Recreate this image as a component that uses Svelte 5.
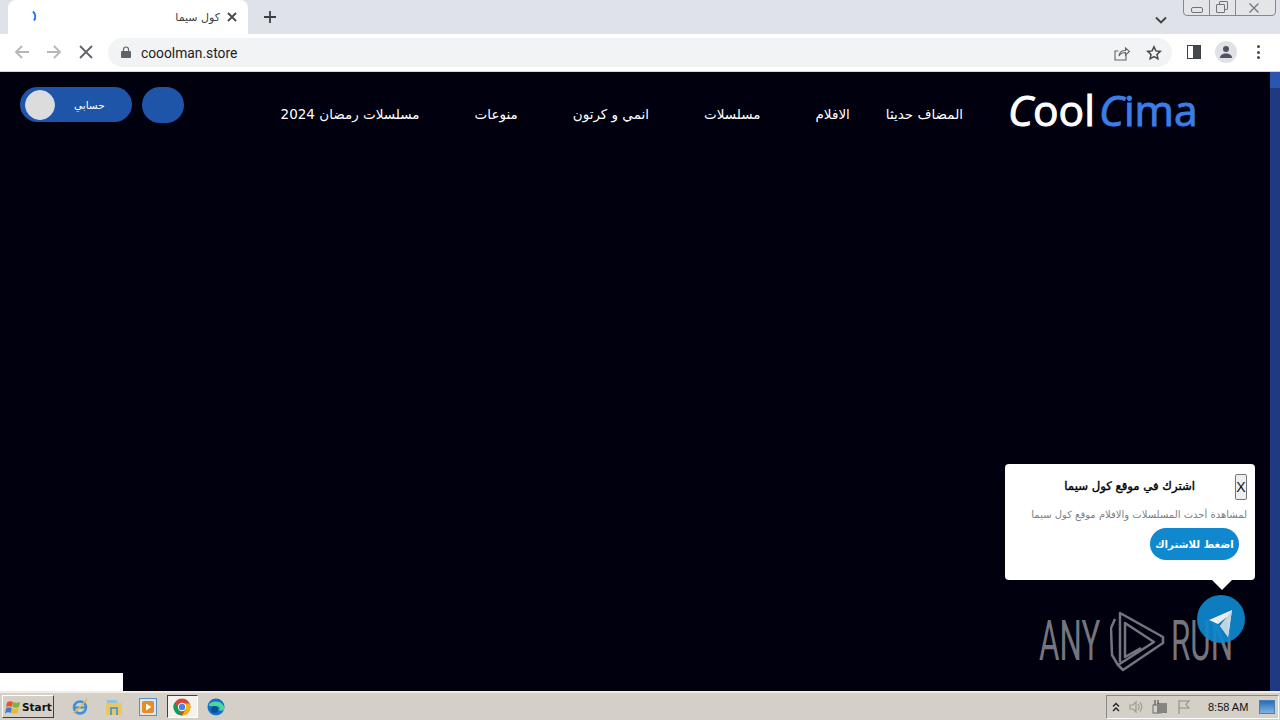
<script lang="ts">
  const navItems = ['المضاف حديثا', 'الافلام', 'مسلسلات', 'انمي و كرتون', 'منوعات', 'مسلسلات رمضان 2024']
</script>

<div class="screen">
  <div class="tabstrip">
    <div class="tab">
      <svg class="spinner" viewBox="0 0 16 16" fill="none" stroke="#1a73e8" stroke-width="2"><path d="M6 3.500a7 7 0 0 1 1 9"/></svg>
      <span class="tab-title">كول سيما</span>
      <svg class="tab-close" viewBox="0 0 10 10" stroke="#45494e" stroke-width="1.800"><path d="M1 1l8 8M9 1l-8 8"/></svg>
    </div>
    <svg class="new-tab" viewBox="0 0 12 12" stroke="#3c4043" stroke-width="1.800"><path d="M6 0v12M0 6h12"/></svg>
    <svg class="tab-menu" viewBox="0 0 12 8" fill="none" stroke="#3c4043" stroke-width="1.800"><path d="M1 1.500l5 5 5-5"/></svg>
    <div class="win-controls">
      <div class="win-btn min"><i></i></div>
      <div class="win-btn restore"><i></i><b></b></div>
      <div class="win-btn close">
        <svg viewBox="0 0 12 10" fill="none" stroke="#6f7378" stroke-width="1.200"><path d="M1.500 .5l9 9M10.500 .5l-9 9"/></svg>
      </div>
    </div>
  </div>

  <div class="toolbar">
    <svg class="tool arrow" viewBox="0 0 16 16" fill="none" stroke="#b4b6b9" stroke-width="1.800"><path d="M15 8H2M8 2L2 8l6 6"/></svg>
    <svg class="tool arrow" viewBox="0 0 16 16" fill="none" stroke="#b4b6b9" stroke-width="1.800"><path d="M1 8h13M8 2l6 6-6 6"/></svg>
    <svg class="tool stop" viewBox="0 0 14 14" fill="none" stroke="#5f6368" stroke-width="1.800"><path d="M1 1l12 12M13 1L1 13"/></svg>
    <div class="omnibox">
      <svg class="lock" viewBox="0 0 10 12" fill="#5f6368"><path d="M1 5h8a1 1 0 0 1 1 1v5a1 1 0 0 1-1 1H1a1 1 0 0 1-1-1V6a1 1 0 0 1 1-1z"/><path d="M2.500 5V3.500a2.500 2.500 0 0 1 5 0V5" fill="none" stroke="#5f6368" stroke-width="1.200"/></svg>
      <span class="url">cooolman.store</span>
      <svg class="share" viewBox="0 0 16 16" fill="none" stroke="#5f6368" stroke-width="1.100"><path d="M12 9.500V15H1V6h3.500"/><path d="M5 11c.4-3.500 3-5.500 6.500-5.500V3L15.500 6.500 11.500 10V7.500C9 7.500 6.500 8.500 5 11z"/></svg>
      <svg class="star" viewBox="0 0 16 16" fill="none" stroke="#45494e" stroke-width="1.500"><path d="M8 1.800l1.900 4.100 4.400.5-3.300 3 .9 4.400L8 11.600l-3.900 2.200.9-4.400-3.300-3 4.400-.5z"/></svg>
    </div>
    <div class="side-panel"><i></i></div>
    <div class="avatar">
      <svg viewBox="0 0 14 14" fill="#4d5361"><circle cx="7" cy="4" r="3"/><path d="M1 13c0-3 2.500-4.500 6-4.500s6 1.500 6 4.500z"/></svg>
    </div>
    <div class="kebab"><i></i><i></i><i></i></div>
  </div>

  <main class="page">
    <div class="content">
      <header class="site-header">
        <div class="user-tools">
          <div class="account-toggle">
            <span class="knob"></span>
            <span class="account-label">حسابي</span>
          </div>
          <div class="round-btn"></div>
        </div>
        <nav class="nav">
          {#each navItems as item}
            <a href="#top">{item}</a>
          {/each}
        </nav>
        <div class="logo" dir="ltr"><span class="c">C</span>ool<span class="blue"><span class="c">C</span>ima</span></div>
      </header>

      <div class="blank-box"></div>

      <div class="subscribe-popup" dir="rtl">
        <div class="popup-head">
          <button class="popup-close">X</button>
          <span class="popup-title">اشترك في موقع كول سيما</span>
        </div>
        <p class="popup-text">لمشاهدة أحدث المسلسلات والافلام موقع كول سيما</p>
        <button class="popup-cta">اضغط للاشتراك</button>
      </div>

      <div class="watermark" aria-hidden="true">
        <span>ANY</span>
        <svg viewBox="0 0 56 62" fill="none" stroke="#75757d" stroke-width="2.500" stroke-linejoin="round"><path d="M10 52V3l43 24v6L13 60l-5-5 36-23L15 13v34l16-9"/><path d="M5 9L1 18l1 27 6 10"/></svg>
        <span>RUN</span>
      </div>

      <div class="telegram">
        <svg viewBox="0 0 48 48"><path fill="#fff" d="M35 15L12 25l9 4 9-7-7 9 8 11z"/><path fill="#cfe6f3" d="M35 15l-4 27-8-11 7-9z"/></svg>
      </div>
    </div>
    <div class="scrollbar"><div class="thumb"></div></div>
  </main>

  <footer class="taskbar">
    <div class="start">
      <svg viewBox="0 0 16 16"><path fill="#e2562a" d="M2 3.500C4 2 6 2 8 3L7 8C5 7 3 7 1 8.500z"/><path fill="#7cb342" d="M8.500 3c2 1 4 1 6.500 0l-1 5c-2 1-4 1-6.500 0z"/><path fill="#3f7fd0" d="M1 9.500C3 8 5 8 6.800 9L6 14c-2-1-4-1-6 .5z"/><path fill="#efb72e" d="M7.500 9c2 1 4 1 6.300 0l-1 5c-2 1-4 1-6.200 0z"/></svg>
      <span>Start</span>
    </div>
    <div class="quick">
      <svg viewBox="0 0 18 18" fill="none"><circle cx="9" cy="9.500" r="6" stroke="#3c8fd8" stroke-width="2.500"/><path d="M4 9.500h10" stroke="#3c8fd8" stroke-width="2"/><path d="M2 15C6 13 12 6 16 1" stroke="#e9b93f" stroke-width="1.500"/></svg>
      <svg viewBox="0 0 18 18"><path fill="#e8c766" d="M1 5h16v12H1z"/><path fill="#8fc3dd" d="M2 2h9l2 3H2z"/><path fill="#5d9cc0" d="M5 9h8v8h-2v-6H7v6H5z"/></svg>
      <svg viewBox="0 0 18 18"><rect x=".5" y=".5" width="17" height="17" fill="#dbe6f3" stroke="#5a8fc6"/><rect x="3" y="3" width="12" height="12" rx="2" fill="#ea8a22"/><path fill="#fff" d="M7 5.500L12.500 9 7 12.500z"/></svg>
      <div class="chrome-task">
        <svg viewBox="0 0 18 18"><circle cx="9" cy="9" r="8.500" fill="#db4437"/><path fill="#0f9d58" d="M1.800 4.500L6 12l3 5.500A8.500 8.500 0 0 1 1.800 4.500z"/><path fill="#f4b400" d="M9 5.500h7.500A8.500 8.500 0 0 1 9 17.500l3.500-6z"/><circle cx="9" cy="9" r="4.200" fill="#fff"/><circle cx="9" cy="9" r="3.200" fill="#4285f4"/></svg>
      </div>
      <svg viewBox="0 0 18 18"><circle cx="9" cy="9" r="8.500" fill="#1372c4"/><path fill="#4fd6a0" d="M1.500 7c3-5 14-5 16 3 0 2.500-3.500 3.500-6 2 2.500-1 1-4-3-4-3 0-5 1-7-1z"/><circle cx="7.500" cy="11.500" r="3.500" fill="#0b4f96"/></svg>
    </div>
    <div class="tray">
      <svg class="tray-up" viewBox="0 0 8 10" fill="none" stroke="#222" stroke-width="1.400"><path d="M1 4.500l3-3 3 3M1 9l3-3 3 3"/></svg>
      <svg class="tray-ico" viewBox="0 0 16 16" fill="none" stroke="#9b9b96" stroke-width="1.200"><path d="M2 6h3l3-3v10l-3-3H2z"/><path d="M10 5c1.500 2 1.500 4 0 6M12 3.500c2.500 3 2.500 6 0 9"/></svg>
      <svg class="tray-ico" viewBox="0 0 16 16"><rect x="1" y="6" width="8" height="8" fill="none" stroke="#6d6d68"/><rect x="5" y="4" width="10" height="10" fill="#85857f"/><path d="M3 1v5M6 1v4" stroke="#55554f" stroke-width="1.200"/></svg>
      <svg class="tray-ico" viewBox="0 0 16 16" fill="none" stroke="#8d8d87" stroke-width="1.100"><path d="M3 1v14M3 2h10l-3 3.500 3 3.500H3"/></svg>
      <span class="clock">8:58 AM</span>
      <div class="show-desktop"></div>
    </div>
  </footer>
</div>

<style>
  :global(body) {
    margin: 0;
    overflow: hidden;
  }

  .screen {
    width: 1280px;
    height: 720px;
    display: flex;
    flex-direction: column;
    font-family: "Roboto", "Liberation Sans", sans-serif;
    overflow: hidden;
  }

  /* browser chrome */
  .tabstrip {
    height: 34px;
    flex-shrink: 0;
    background: #dfe2e8;
    display: flex;
    align-items: flex-end;
    padding-left: 8px;
    position: relative;
  }

  .tab {
    width: 240px;
    height: 34px;
    box-sizing: border-box;
    background: #fff;
    border-radius: 8px 8px 0 0;
    display: flex;
    align-items: center;
    padding: 0 11px 0 19px;
    margin-right: 16px;
  }

  .spinner {
    width: 16px;
    height: 16px;
    margin-top: -2px;
  }

  .tab-title {
    margin-left: auto;
    margin-right: 7px;
    font-family: "DejaVu Sans", sans-serif;
    font-size: 11px;
    color: #3c4043;
    margin-top: 1px;
  }

  .tab-close {
    width: 10px;
    height: 10px;
  }

  .new-tab {
    width: 12px;
    height: 12px;
    margin-bottom: 11px;
  }

  .tab-menu {
    width: 12px;
    height: 8px;
    margin-left: auto;
    margin-bottom: 10px;
    margin-right: 113px;
  }

  .win-controls {
    position: absolute;
    top: -1px;
    right: 4px;
    width: 93px;
    height: 17px;
    box-sizing: border-box;
    display: flex;
    border: 1px solid #85898f;
    border-radius: 0 0 4px 4px;
    background: #e3e5e9;
  }

  .win-btn {
    width: 25px;
    border-right: 1px solid #85898f;
    position: relative;
    display: flex;
    align-items: center;
    justify-content: center;
  }

  .win-btn.close {
    flex: 1;
    border-right: 0;
    padding-right: 4px;
  }

  .win-btn.close svg {
    width: 12px;
    height: 10px;
  }

  .min i {
    width: 10px;
    height: 4px;
    border: 1px solid #6f7378;
    border-radius: 2px;
    margin-top: 4px;
  }

  .restore i,
  .restore b {
    position: absolute;
    width: 7px;
    height: 7px;
    border: 1.500px solid #6f7378;
    border-radius: 1px;
  }

  .restore i {
    left: 9px;
    top: 1px;
  }

  .restore b {
    left: 6px;
    top: 4px;
    background: #e3e5e9;
  }

  .toolbar {
    height: 37px;
    flex-shrink: 0;
    box-sizing: border-box;
    background: #fff;
    border-bottom: 1px solid #d2d4d8;
    display: flex;
    align-items: center;
    padding: 0 17px 2px 14px;
    margin-top: 1px;
  }

  .tool.arrow {
    width: 16px;
    height: 16px;
    margin-right: 16px;
  }

  .tool.stop {
    width: 14px;
    height: 14px;
    margin-left: 1px;
    margin-right: 15px;
  }

  .omnibox {
    width: 1064px;
    height: 29px;
    margin-top: 1px;
    box-sizing: border-box;
    border-radius: 15px;
    background: #f1f3f4;
    display: flex;
    align-items: center;
    padding: 0 10px 0 13px;
  }

  .lock {
    width: 10px;
    height: 12px;
    margin-top: -2px;
  }

  .url {
    margin-left: 10px;
    font-size: 13.800px;
    color: #202124;
  }

  .share {
    width: 16px;
    height: 16px;
    margin-left: auto;
    margin-right: 16px;
  }

  .star {
    width: 16px;
    height: 16px;
  }

  .side-panel {
    width: 12px;
    height: 12px;
    border: 1px solid #3c4043;
    margin-left: 15px;
    display: flex;
    justify-content: flex-end;
  }

  .side-panel i {
    width: 7px;
    background: #45494e;
  }

  .avatar {
    width: 22px;
    height: 22px;
    margin-left: 14px;
    border-radius: 50%;
    background: #dfe1e5;
    display: flex;
    align-items: center;
    justify-content: center;
  }

  .avatar svg {
    width: 14px;
    height: 14px;
  }

  .kebab {
    margin-left: 20px;
    display: flex;
    flex-direction: column;
    gap: 2.500px;
  }

  .kebab i {
    width: 3px;
    height: 3px;
    border-radius: 50%;
    background: #45494e;
  }

  /* page */
  .page {
    flex: 1;
    min-height: 0;
    display: flex;
    background: #00000f;
  }

  .content {
    flex: 1;
    position: relative;
  }

  .site-header {
    display: flex;
    align-items: flex-start;
    padding: 15px 71px 0 20px;
  }

  .user-tools {
    display: flex;
    gap: 10px;
  }

  .account-toggle {
    width: 112px;
    height: 35px;
    border-radius: 18px;
    background: #1f55a8;
    display: flex;
    align-items: center;
    padding-left: 5px;
    box-sizing: border-box;
  }

  .knob {
    width: 30px;
    height: 30px;
    box-sizing: border-box;
    border-radius: 50%;
    background: #dcdcdc;
    border: 1px solid #c8dcf5;
  }

  .account-label {
    margin-left: 19px;
    font-family: "DejaVu Sans", sans-serif;
    font-size: 10.500px;
    color: #fff;
  }

  .round-btn {
    width: 42px;
    height: 36px;
    border-radius: 18px;
    background: #1f55a8;
  }

  .nav {
    display: flex;
    align-items: center;
    flex: 1;
    direction: rtl;
    margin: 19px 47px 0 0;
    gap: 55px;
  }

  .nav a {
    font-family: "DejaVu Sans", sans-serif;
    font-size: 13.500px;
    color: #fff;
    text-decoration: none;
    white-space: nowrap;
  }

  .nav a:first-child {
    margin-left: -19px;
  }

  .logo {
    width: 189px;
    flex-shrink: 0;
    margin-top: -2px;
    font-family: "Open Sans", "DejaVu Sans", sans-serif;
    font-size: 42.500px;
    line-height: 50px;
    color: #fff;
    white-space: nowrap;
    text-indent: -2px;
    -webkit-text-stroke: 1px currentColor;
  }

  .logo .blue {
    color: #3b7de8;
    margin-left: 4px;
  }

  .logo .c {
    font-style: italic;
  }

  .blank-box {
    position: absolute;
    left: 0;
    bottom: 0;
    width: 123px;
    height: 18px;
    background: #fff;
  }

  .watermark {
    position: absolute;
    left: 1039px;
    top: 538px;
    display: flex;
    align-items: center;
    color: #75757d;
    font-family: "Roboto", "Liberation Sans", sans-serif;
    font-size: 56px;
    line-height: 62px;
    pointer-events: none;
  }

  .watermark span {
    display: block;
    width: 62px;
    transform: scaleX(0.56);
    transform-origin: left center;
    white-space: nowrap;
  }

  .watermark svg {
    width: 56px;
    height: 62px;
    margin: 0 5px 0 9px;
  }

  .subscribe-popup {
    position: absolute;
    left: 1005px;
    top: 392px;
    width: 250px;
    height: 116px;
    box-sizing: border-box;
    padding: 7px 8px 0;
    background: #fff;
    border-radius: 4px;
    font-family: "DejaVu Sans", sans-serif;
  }

  .subscribe-popup::after {
    content: '';
    position: absolute;
    right: 23px;
    bottom: -10px;
    border: 10px solid transparent;
    border-bottom: 0;
    border-top: 10px solid #fff;
  }

  .popup-head {
    display: flex;
    align-items: center;
    height: 30px;
  }

  .popup-close {
    width: 12px;
    height: 26px;
    padding: 0;
    font-family: "Liberation Sans", sans-serif;
    font-size: 14px;
    color: #111;
    background: #efefef;
    border: 1px solid #767676;
    border-radius: 2px;
    margin-top: 2px;
  }

  .popup-title {
    margin-right: 40px;
    font-size: 11.700px;
    color: #000;
    white-space: nowrap;
    -webkit-text-stroke: 0.400px #000;
  }

  .popup-text {
    margin: 6px 0 0;
    font-size: 10px;
    line-height: 16px;
    color: #808080;
    white-space: nowrap;
  }

  .popup-cta {
    display: block;
    width: 89px;
    height: 32px;
    margin: 5px 8px 0 0;
    padding: 0;
    border: 0;
    border-radius: 16px;
    background: #0f88cf;
    color: #fff;
    font-family: "DejaVu Sans", sans-serif;
    font-size: 10.200px;
    font-weight: 700;
    white-space: nowrap;
  }

  .telegram {
    position: absolute;
    left: 1197px;
    top: 523px;
    width: 48px;
    height: 48px;
    border-radius: 50%;
    background: #0f88cf;
    opacity: 0.92;
  }

  .telegram svg {
    display: block;
    width: 48px;
    height: 48px;
  }

  .scrollbar {
    width: 10px;
    flex-shrink: 0;
    background: #1f3a80;
  }

  .thumb {
    height: 16px;
    background: #2a56b0;
  }

  /* windows taskbar */
  .taskbar {
    height: 29px;
    flex-shrink: 0;
    box-sizing: border-box;
    background: #d4d0c8;
    border-top: 2px solid #f0ece4;
    display: flex;
    align-items: center;
    padding: 0 1px 0 2px;
  }

  .start {
    width: 52px;
    height: 23px;
    box-sizing: border-box;
    display: flex;
    align-items: center;
    gap: 1px;
    padding-left: 2px;
    background: #d4d0c8;
    border: 1px solid;
    border-color: #fff #404040 #404040 #fff;
    font-family: "DejaVu Sans", sans-serif;
    font-size: 10.500px;
    font-weight: 700;
    color: #111;
  }

  .start svg {
    width: 16px;
    height: 16px;
    flex-shrink: 0;
  }

  .quick {
    display: flex;
    align-items: center;
    margin-left: 17px;
    gap: 16px;
  }

  .quick svg {
    width: 18px;
    height: 18px;
  }

  .chrome-task {
    width: 31px;
    height: 23px;
    box-sizing: border-box;
    margin: 0 -6.500px;
    display: flex;
    align-items: center;
    justify-content: center;
    background: #f4f2ee;
    border: 1px solid;
    border-color: #404040 #fff #fff #404040;
  }

  .tray {
    margin-left: auto;
    width: 173px;
    height: 24px;
    box-sizing: border-box;
    display: flex;
    align-items: center;
    border: 1px solid;
    border-color: #8c8a84 #fff #fff #8c8a84;
    padding-left: 5px;
  }

  .tray-up {
    width: 8px;
    height: 10px;
  }

  .tray-ico {
    width: 16px;
    height: 16px;
    margin-left: 8px;
  }

  .clock {
    margin-left: 16px;
    font-family: "Liberation Sans", sans-serif;
    font-size: 11px;
    color: #111;
    white-space: nowrap;
  }

  .show-desktop {
    width: 16px;
    height: 14px;
    margin-left: auto;
    margin-right: 3px;
    background: linear-gradient(#2d6ab8, #7fb4e0);
    border: 1px solid #4a80b8;
    box-sizing: border-box;
  }
</style>
